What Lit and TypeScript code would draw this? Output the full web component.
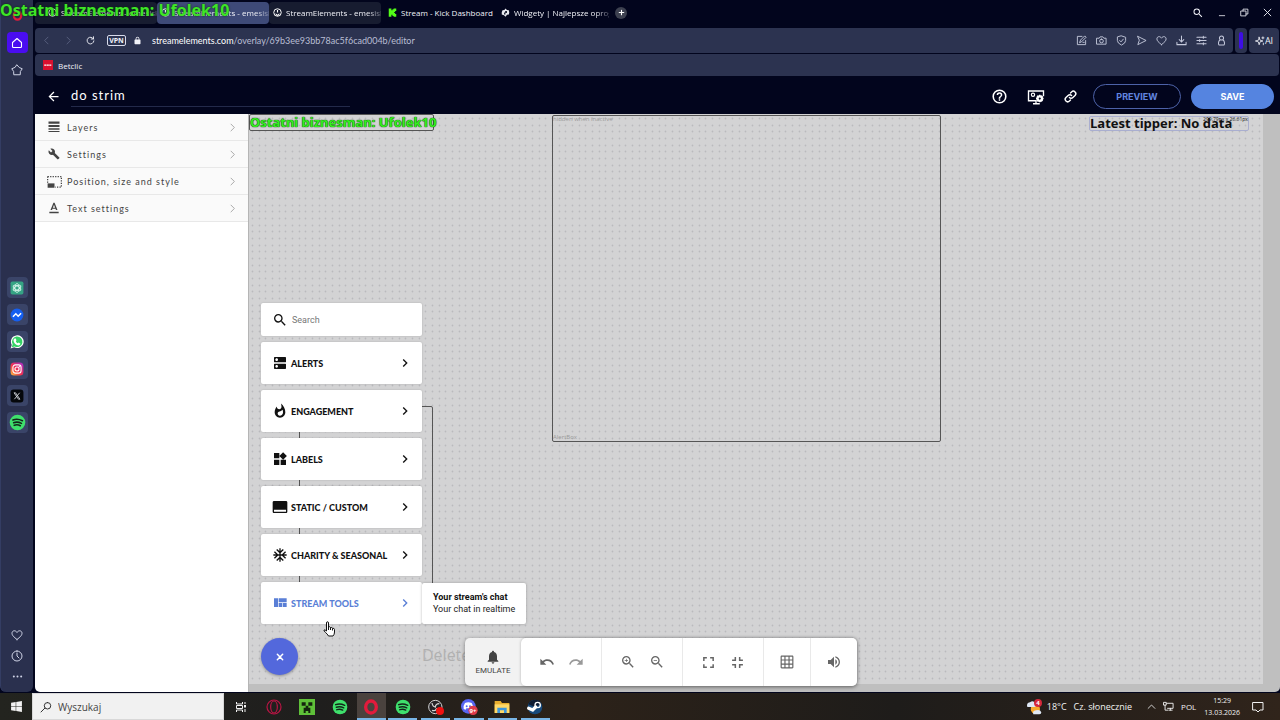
import { LitElement, html, css, svg } from "lit";
import { customElement } from "lit/decorators.js";
import { classMap } from "lit/directives/class-map.js";

const solid = (d: string) => svg`<path fill="currentColor" d=${d}></path>`;
const line = (d: string, w = 1.5) =>
  svg`<path fill="none" stroke="currentColor" stroke-width=${w} stroke-linecap="round" stroke-linejoin="round" d=${d}></path>`;

const spotify = svg`<circle cx="12" cy="12" r="11" fill="#3fe06c"></circle><path fill="none" stroke="#13261a" stroke-width="2.2" stroke-linecap="round" d="M5.5 8.5Q12 6 19 9.5M6.5 12.3Q12 10.3 17.6 13.2M7.3 16Q12 14.3 16 16.6"></path>`;
const seMark = svg`<circle cx="12" cy="12" r="10" fill="none" stroke="#fff" stroke-width="2.6"></circle><path fill="#fff" d="M10.5 5h3v7h-3zM7 14l5 4 5-4v3l-5 4-5-4z"></path>`;

const icons: Record<string, unknown> = {
  back: solid("M20 11H7.83l5.59-5.59L12 4l-8 8 8 8 1.41-1.41L7.83 13H20z"),
  chevron: solid("M10 6 8.59 7.41 13.17 12l-4.58 4.59L10 18l6-6z"),
  thin: line("M8 3l9 9-9 9", 2.2),
  thinLeft: line("M16 3l-9 9 9 9", 2.2),
  search: solid("M15.5 14h-.79l-.28-.27A6.471 6.471 0 0 0 16 9.5 6.5 6.5 0 1 0 9.5 16c1.61 0 3.09-.59 4.23-1.57l.27.28v.79l5 4.99L20.49 19zm-6 0C7.01 14 5 11.99 5 9.5S7.01 5 9.5 5 14 7.01 14 9.5 11.99 14 9.5 14z"),
  dns: solid("M20 13H4c-.55 0-1 .45-1 1v6c0 .55.45 1 1 1h16c.55 0 1-.45 1-1v-6c0-.55-.45-1-1-1zM7 19c-1.1 0-2-.9-2-2s.9-2 2-2 2 .9 2 2-.9 2-2 2zM20 3H4c-.55 0-1 .45-1 1v6c0 .55.45 1 1 1h16c.55 0 1-.45 1-1V4c0-.55-.45-1-1-1zM7 9c-1.1 0-2-.9-2-2s.9-2 2-2 2 .9 2 2-.9 2-2 2z"),
  fire: solid("M13.5.67s.74 2.65.74 4.8c0 2.06-1.35 3.73-3.41 3.73-2.07 0-3.63-1.67-3.63-3.73l.03-.36C5.21 7.51 4 10.62 4 14c0 4.42 3.58 8 8 8s8-3.58 8-8C20 8.61 17.41 3.8 13.5.67zM11.71 19c-1.78 0-3.22-1.4-3.22-3.14 0-1.62 1.05-2.76 2.81-3.12 1.77-.36 3.6-1.21 4.62-2.58.39 1.29.59 2.65.59 4.04 0 2.65-2.15 4.8-4.8 4.8z"),
  widgets: solid("M13 13v8h8v-8h-8zM3 21h8v-8H3v8zM3 3v8h8V3H3zm13.66-1.31L11 7.34 16.66 13l5.66-5.66-5.66-5.65z"),
  label: solid("M21 3H3c-1.1 0-2 .9-2 2v14c0 1.1.9 2 2 2h18c1.1 0 2-.9 2-2V5c0-1.1-.9-2-2-2zm0 16H3v-3h18v3z"),
  snow: solid("M22 11h-4.17l3.24-3.24-1.41-1.42L15 11h-2V9l4.66-4.66-1.42-1.41L13 6.17V2h-2v4.17L7.76 2.93 6.34 4.34 11 9v2H9L4.34 6.34 2.93 7.76 6.17 11H2v2h4.17l-3.24 3.24 1.41 1.42L9 13h2v2l-4.66 4.66 1.42 1.41L11 17.83V22h2v-4.17l3.24 3.24 1.42-1.41L13 15v-2h2l4.66 4.66 1.41-1.42L17.83 13H22z"),
  quilt: solid("M10 18h5v-6h-5v6zm-7 0h6V5H3v13zm13 0h6v-6h-6v6zM10 5v6h12V5H10z"),
  bell: solid("M12 22c1.1 0 2-.9 2-2h-4c0 1.1.89 2 2 2zm6-6v-5c0-3.07-1.64-5.64-4.5-6.32V4c0-.83-.67-1.5-1.5-1.5s-1.5.67-1.5 1.5v.68C7.63 5.36 6 7.92 6 11v5l-2 2v1h16v-1z"),
  undo: solid("M12.5 8c-2.65 0-5.05.99-6.9 2.6L2 7v9h9l-3.62-3.62c1.39-1.16 3.16-1.88 5.12-1.88 3.54 0 6.55 2.31 7.6 5.5l2.37-.78C21.08 11.03 17.15 8 12.5 8z"),
  redo: solid("M18.4 10.6C16.55 8.99 14.15 8 11.5 8c-4.65 0-8.58 3.03-9.96 7.22L3.9 16a8.002 8.002 0 0 1 7.6-5.5c1.95 0 3.73.72 5.12 1.88L13 16h9V7z"),
  zoomIn: solid("M15.5 14h-.79l-.28-.27A6.471 6.471 0 0 0 16 9.5 6.5 6.5 0 1 0 9.5 16c1.61 0 3.09-.59 4.23-1.57l.27.28v.79l5 4.99L20.49 19zm-6 0C7.01 14 5 11.99 5 9.5S7.01 5 9.5 5 14 7.01 14 9.5 11.99 14 9.5 14zM12 10h-2v2H9v-2H7V9h2V7h1v2h2z"),
  zoomOut: solid("M15.5 14h-.79l-.28-.27A6.471 6.471 0 0 0 16 9.5 6.5 6.5 0 1 0 9.5 16c1.61 0 3.09-.59 4.23-1.57l.27.28v.79l5 4.99L20.49 19zm-6 0C7.01 14 5 11.99 5 9.5S7.01 5 9.5 5 14 7.01 14 9.5 11.99 14 9.5 14zM7 9h5v1H7z"),
  expand: solid("M2 2h7v2.800H4.800V9H2zM15 2h7v7h-2.800V4.800H15zM2 15h2.800v4.200H9V22H2zM19.200 15H22v7h-7v-2.800h4.200z"),
  shrink: solid("M6.600 2h2.800v7.400H2V6.600h4.600zM14.600 2h2.800v4.600H22v2.800h-7.400zM2 14.600h7.400V22H6.600v-4.600H2zM14.600 14.600H22v2.800h-4.600V22h-2.800z"),
  grid: solid("M21 1H3c-1.100 0-2 .9-2 2v18c0 1.100.9 2 2 2h18c1.100 0 2-.9 2-2V3c0-1.100-.9-2-2-2zM7.500 21H3v-4.500h4.500zm0-6.500H3v-5h4.500zm0-7H3V3h4.500zm7 13.500h-5v-4.500h5zm0-6.500h-5v-5h5zm0-7h-5V3h5zM21 21h-4.500v-4.500H21zm0-6.500h-4.500v-5H21zm0-7h-4.500V3H21z"),
  volume: solid("M3 9v6h4l5 5V4L7 9H3zm13.500 3A4.500 4.500 0 0 0 14 7.970v8.050c1.480-.73 2.500-2.250 2.500-4.020zM14 3.230v2.060c2.890.86 5 3.540 5 6.710s-2.110 5.850-5 6.710v2.060c4.010-.91 7-4.490 7-8.770s-2.990-7.860-7-8.770z"),
  close: line("M4 4l16 16M20 4L4 20", 4.5),
  windowClose: line("M3 3l18 18M21 3L3 21", 2.4),
  layers: solid("M1 1h22v4.500H1zM1 8h22v4H1zM1 14.500h22v3H1zM1 20h22v2H1z"),
  wrench: solid("M22.700 19l-9.100-9.100c.9-2.300.4-5-1.500-6.900-2-2-5-2.400-7.400-1.300L9 6 6 9 1.600 4.700C.4 7.100.9 10.100 2.900 12.100c1.900 1.900 4.600 2.400 6.900 1.500l9.100 9.100c.4.4 1 .4 1.400 0l2.300-2.300c.5-.4.5-1.100.1-1.400z"),
  position: svg`<path fill="none" stroke="currentColor" stroke-width="2" stroke-dasharray="2 2" d="M1 4h22v17H13M1 4v12"></path><path fill="currentColor" d="M1 15h11v7H1z"></path>`,
  textA: solid("M4 18.500v2.500h16v-2.500zM9.500 13.300h5l.9 2.200h2.600L13 3h-2L6 15.500h2.600zM12 6.300l1.870 5.200h-3.740z"),
  help: solid("M11 18h2v-2h-2zm1-16a10 10 0 1 0 0 20 10 10 0 0 0 0-20zm0 17.800a7.800 7.800 0 1 1 0-15.600 7.800 7.800 0 0 1 0 15.600zM12 6a4 4 0 0 0-4 4h2.200a1.800 1.800 0 1 1 3.600 0c0 2-3 1.750-3 5h2.200c0-2.250 3-2.500 3-5a4 4 0 0 0-4-4z"),
  monitor: svg`<path fill="none" stroke="currentColor" stroke-width="1.800" d="M22 11V4H2v13h11M8 21h9M12 17v4"></path><circle cx="8" cy="9" r="2.200" fill="none" stroke="currentColor" stroke-width="1.500"></circle><circle cx="17" cy="14" r="3" fill="none" stroke="currentColor" stroke-width="3"></circle><path stroke="currentColor" stroke-width="2" d="M17 9v3M17 16v3M12 14h3M19 14h3M13.500 10.500l2 2M18.500 15.500l2 2M20.500 10.500l-2 2M13.500 17.500l2-2"></path>`,
  link: line("M10 14a4.500 4.500 0 0 0 6.400 0l4-4A4.500 4.500 0 0 0 14 3.600l-2 2M14 10a4.500 4.500 0 0 0-6.400 0l-4 4A4.500 4.500 0 0 0 10 20.400l2-2", 2.600),
  home: line("M3 11l9-8 9 8v8q0 2-2 2H5q-2 0-2-2z", 2.2),
  star: line("M12 2l4.500 5 6 2.500-3.800 5.500-.2 6.500H5.500L5.300 15 1.500 9.500l6-2.500z", 2),
  heart: line("M12 21C5 15.500 2 12.500 2 8.500 2 3 9 1.500 12 7c3-5.500 10-4 10 1.500 0 4-3 7-10 12.500z", 2),
  clock: line("M12 2a10 10 0 1 0 0 20 10 10 0 0 0 0-20zM12 6v6l4 4", 2),
  dots: svg`<g fill="currentColor"><circle cx="4" cy="12" r="2.200"></circle><circle cx="12" cy="12" r="2.200"></circle><circle cx="20" cy="12" r="2.200"></circle></g>`,
  reload: line("M20 8a9 9 0 1 0 1 5M20 2v6h-6", 2.4),
  lock: solid("M18 9h-1V7A5 5 0 0 0 7 7v2H6q-2 0-2 2v9q0 2 2 2h12q2 0 2-2v-9q0-2-2-2zM9 9V7a3 3 0 0 1 6 0v2z"),
  edit: line("M13 3H3v18h18V12M8 16l2-5 9-9 3 3-9 9zM15 16h3", 2),
  camera: line("M2 7h5l2-3h6l2 3h5v13H2zM12 9a4 4 0 1 0 0 8 4 4 0 0 0 0-8z", 2),
  shield: line("M12 2l9 3v7q0 6-9 10-9-4-9-10V5zM8 12l3 3 5-6", 2),
  send: line("M4 3l18 9-18 9 3-9z", 2),
  download: line("M12 2v13M7 10l5 5 5-5M2 16v5h20v-5", 2.2),
  sliders: line("M2 5h20M2 12h20M2 19h20M16 3v4M8 10v4M16 17v4", 2.2),
  person: line("M12 2a4.500 4.500 0 1 0 0 9 4.500 4.500 0 0 0 0-9zM8.500 11C5 13 4 22 8 22h8c4 0 3-9-.5-11", 2.2),
  spark: line("M10 3l2 7 7 2-7 2-2 7-2-7-7-2 7-2zM19 2v5M16.500 4.500h5M20 17v4", 2),
  restore: line("M3 8h13v13H3zM8 8V3h13v13h-5", 2.2),
  minimize: line("M4 20h16", 2.4),
  plus: line("M12 6v12M6 12h12", 3),
  se: seMark,
  kick: svg`<path fill="#53fc18" d="M2 1h7v5h3V3h3V1h7v7h-3v3h-3v2h3v3h3v7h-7v-2h-3v-3H9v5H2z"></path>`,
  puzzle: svg`<path fill="#e9eaf0" d="M12 1l4 4 5 1 1 6-1 5-5 1-4 5-4-4-6-2 0-6 2-5 5-1z"></path><path fill="#222638" d="M11 8h5v5h-4v4H8v-5h3z"></path>`,
  betclic: svg`<path fill="#d9102f" d="M0 0h24v24H0z"></path><path stroke="#fff" stroke-width="3" stroke-dasharray="5 1" d="M3 12h18"></path>`,
  gpt: svg`<rect x="1" y="1" width="22" height="22" rx="3" fill="#35a384"></rect><g fill="none" stroke="#d5f4ea" stroke-width="1.500"><ellipse cx="12" cy="12" rx="3.500" ry="7.500"></ellipse><ellipse cx="12" cy="12" rx="3.500" ry="7.500" transform="rotate(60 12 12)"></ellipse><ellipse cx="12" cy="12" rx="3.500" ry="7.500" transform="rotate(120 12 12)"></ellipse></g>`,
  messenger: svg`<circle cx="12" cy="12" r="11" fill="#155ff0"></circle><path fill="none" stroke="#fff" stroke-width="2.600" d="M5 15l5-5 4 4 5-5"></path>`,
  whatsapp: svg`<path fill="#fff" d="M1 23l2-6A11 11 0 1 1 7 21z"></path><path fill="#35d366" d="M3 21l1.500-5A9 9 0 1 1 8 19.500z"></path><path fill="#fff" d="M8 6l2 0 1 3-1 2q1 2 3 3l2-1 3 2q-1 3-4 3-7-2-8-8 0-3 2-4z"></path>`,
  instagram: svg`<defs><linearGradient id="ig" x1="0" y1="1" x2="1" y2="0"><stop offset="0" stop-color="#fdc23c"></stop><stop offset=".45" stop-color="#f2304f"></stop><stop offset="1" stop-color="#a22cd0"></stop></linearGradient></defs><rect x="1" y="1" width="22" height="22" rx="6" fill="url(#ig)"></rect><g fill="none" stroke="#fff" stroke-width="1.900"><rect x="5" y="5" width="14" height="14" rx="4"></rect><circle cx="12" cy="12" r="3.500"></circle></g><circle cx="16" cy="8" r="1.200" fill="#fff"></circle>`,
  xapp: svg`<rect x="1" y="1" width="22" height="22" rx="5" fill="#05070b"></rect><path fill="none" stroke="#d9dbe0" stroke-width="1.500" d="M7 6.500h2.500L17 17.500h-2.500zM16.500 6.500l-9 11"></path>`,
  spotify,
  opera: svg`<ellipse cx="12" cy="12" rx="8" ry="9" fill="none" stroke="#e21b3c" stroke-width="5"></ellipse>`,
  operaGx: svg`<g fill="none" stroke="#b81544" stroke-width="1.800"><circle cx="12" cy="12" r="10.500"></circle><ellipse cx="12" cy="12" rx="5" ry="9"></ellipse></g>`,
  windows: solid("M2 5l8.500-1.300v7.800H2zM11.500 3.500L22 2v9.500H11.500zM2 12.500h8.500v7.800L2 19zM11.500 12.500H22V22l-10.500-1.500z"),
  taskview: svg`<path fill="none" stroke="currentColor" stroke-width="2" d="M3 2v4h12V2M3 22v-4h12v4M3 9h12v6H3zM20 2v4M20 16v6"></path><path fill="currentColor" d="M18 8h4v5h-4z"></path>`,
  winSearch: line("M15 3a6.500 6.500 0 1 0 0 13 6.500 6.500 0 0 0 0-13zM10 14l-8 8", 2),
  creeper: svg`<path fill="#5fc039" d="M0 0h24v24H0z"></path><path fill="#14240e" d="M4 5h6v5H4zM14 5h6v5h-6zM10 10h4v3h3v8h-3v-3h-4v3H7v-8h3z"></path>`,
  obs: svg`<circle cx="11" cy="12" r="10" fill="#242226" stroke="#d5d5d5" stroke-width="1.500"></circle><path fill="none" stroke="#d5d5d5" stroke-width="1.800" d="M6 6q1 6 6 6M17 7q-6 0-6 6M6 17q5 2 7-3"></path><circle cx="18" cy="18" r="6" fill="#ef1111"></circle>`,
  discord: svg`<circle cx="11" cy="11" r="11" fill="#5865f2"></circle><path fill="#fff" d="M6 6q5-2 10 0 3 4 2 9l-3 1-1-2H8l-1 2-3-1Q3 10 6 6z"></path><circle cx="8.500" cy="11" r="1.500" fill="#5865f2"></circle><circle cx="13.500" cy="11" r="1.500" fill="#5865f2"></circle><circle cx="18" cy="17" r="7" fill="#df3b4c"></circle><text x="18" y="20.500" font-size="9" font-weight="700" text-anchor="middle" fill="#fff" font-family="Open Sans, sans-serif">9+</text>`,
  folder: svg`<path fill="#e8ae2f" d="M1 3h9l2 3h11v15H1z"></path><path fill="#ffd969" d="M1 8h22v13H1z"></path><path fill="#3e97dc" d="M5 13h14v8h-4v-4H9v4H5z"></path>`,
  steam: svg`<circle cx="12" cy="12" r="11" fill="#174a7c"></circle><path fill="#0d1c33" d="M2 8a11 11 0 0 1 20-1L12 12z"></path><circle cx="16" cy="9" r="4" fill="none" stroke="#fff" stroke-width="2"></circle><path stroke="#fff" stroke-width="5" stroke-linecap="round" d="M2.500 14l6 2.500M9 16l4-4"></path>`,
  weather: svg`<circle cx="14" cy="15" r="7" fill="#f7a92c"></circle><path fill="#dfe8f5" d="M2 12q-2-6 4-7 5-4 8 2 3 4-2 5zM11 23q-2-5 4-6 6-2 8 3 0 3-3 3z"></path><circle cx="18" cy="6" r="6" fill="#d4283a"></circle><text x="18" y="9.500" font-size="9" font-weight="700" text-anchor="middle" fill="#fff" font-family="Open Sans, sans-serif">4</text>`,
  caret: line("M3 17l9-9 9 9", 2.2),
  network: line("M8 5h14v11H10M2 3h5v6H2zM4.500 9v11h6M13 20h7M16 16v4", 2),
  notice: line("M2 3h20v15h-6l-4 4-4-4H2z", 2),
};

const icon = (name: string, size = 12, cls = "") =>
  html`<svg class="icon ${cls}" width=${size} height=${size} viewBox="0 0 24 24" aria-hidden="true">${icons[name]}</svg>`;

const base = css`
  *, *::before, *::after { box-sizing: border-box; }
  :host { font-family: "Open Sans", "Noto Sans", sans-serif; }
  .icon { display: block; flex: none; overflow: visible; }
  button { appearance: none; border: 0; margin: 0; padding: 0; background: none; color: inherit; font: inherit;
    display: flex; align-items: center; justify-content: center; }
  input { border: 0; outline: 0; padding: 0; margin: 0; background: none; color: inherit; font: inherit; min-width: 0; }
  a { color: inherit; text-decoration: none; }
`;

@customElement("side-rail")
class SideRail extends LitElement {
  static styles = [base, css`
    :host { display: flex; flex-direction: column; align-items: center; background: #2a304e; color: #cfd3e6;
      border-radius: 0 0 6px 6px; padding: 10px 0 5px; border-left: 1px solid #343d63; }
    .group { display: flex; flex-direction: column; align-items: center; gap: 6px; }
    .opera { height: 17px; margin-bottom: 5px; }
    button { width: 21px; height: 21px; border-radius: 4px; }
    .home { background: #4a0df0; color: #fff; }
    .apps { margin: auto 0; padding-top: 6px; }
    .app { background: #3a4468; }
    .foot { gap: 0; }
  `];
  render() {
    return html`
      <div class="group"><span class="opera">${icon("opera", 11)}</span></div>
      <div class="group">
        <button class="home" aria-label="Home">${icon("home", 12)}</button>
        <button aria-label="Bookmarks">${icon("star", 12)}</button>
      </div>
      <div class="group apps">
        ${["gpt", "messenger", "whatsapp", "instagram", "xapp", "spotify"].map(
          (n) => html`<button class="app" aria-label=${n}>${icon(n, n === "spotify" ? 17 : 14)}</button>`)}
      </div>
      <div class="group foot">
        <button aria-label="Favourites">${icon("heart", 12)}</button>
        <button aria-label="History">${icon("clock", 12)}</button>
        <button aria-label="More">${icon("dots", 11)}</button>
      </div>`;
  }
}

const tabs = [
  { icon: "se", title: "StreamElements - emesisk", shade: "dim" },
  { icon: "se", title: "StreamElements - emesisk", shade: "active" },
  { icon: "se", title: "StreamElements - emesisk", shade: "dim" },
  { icon: "kick", title: "Stream - Kick Dashboard", shade: "wide" },
  { icon: "puzzle", title: "Widgety | Najlepsze oprog", shade: "plain" },
];

@customElement("browser-chrome")
class BrowserChrome extends LitElement {
  static styles = [base, css`
    :host { display: block; color: #f1f2f8; font-size: 8px; }
    .tabs { display: flex; align-items: center; height: 28px; padding: 0 8px 3px 0; }
    .tab { display: flex; align-items: center; justify-content: flex-start; gap: 4px; width: 112px; height: 22px; padding: 0 0 0 4px; border-radius: 4px; }
    .tab.dim { background: #171c30; }
    .tab.active { background: #3e4a78; }
    .tab.wide { width: 116px; padding-left: 7px; }
    .tab:first-child { width: 122px; padding-left: 13px; }
    .name { overflow: hidden; white-space: nowrap; mask-image: linear-gradient(90deg, #000 85%, #0004); }
    .wide .name { mask-image: none; }
    .add { width: 12px; height: 12px; border-radius: 6px; background: #3d4150; margin-left: 6px; color: #fff; }
    .window { display: flex; gap: 14px; margin-left: auto; }
    .bar { display: flex; gap: 2px; height: 25px; margin-right: 1px; }
    .address { flex: 1; display: flex; align-items: center; background: #2c3350; border-radius: 4px; padding: 0 6px 0 7px; }
    .nav { display: flex; gap: 13px; margin-right: 12px; }
    .off { color: #5d6584; }
    .vpn { border: 1px solid #d7daea; border-radius: 2px; font-size: 7px; line-height: 9px; font-weight: 700; margin-right: 7px; width: 19px; }
    .url { flex: 1; margin-left: 10px; font-family: Lato, sans-serif; font-size: 9px; color: #b9bed3; }
    .url b { font-weight: 400; color: #fff; }
    .tools { display: flex; gap: 9px; color: #c5c9dc; }
    .pill { background: #2c3350; border-radius: 4px; width: 12px; padding: 4px; }
    .pill span { display: block; height: 17px; background: #3d0de6; border-radius: 2px; }
    .ai { background: #2c3350; border-radius: 4px; width: 30px; font-size: 9px; }
    .marks { display: flex; align-items: center; height: 22px; background: #2c3350; border-radius: 4px; margin: 1px 1px 0 0; padding: 0 8px; }
    .marks a { display: flex; align-items: center; gap: 5px; }
  `];
  render() {
    return html`
      <div class="tabs">
        ${tabs.map((t) => html`<button class=${classMap({ tab: true, [t.shade]: true })}>${icon(t.icon, 9)}<span class="name">${t.title}</span></button>`)}
        <button class="add" aria-label="New tab">${icon("plus", 9)}</button>
        <div class="window">
          <button aria-label="Search tabs">${icon("search", 12)}</button>
          <button aria-label="Minimize">${icon("minimize", 8)}</button>
          <button aria-label="Restore">${icon("restore", 9)}</button>
          <button aria-label="Close">${icon("windowClose", 9)}</button>
        </div>
      </div>
      <div class="bar">
        <div class="address">
          <div class="nav">
            <button class="off" aria-label="Back">${icon("thinLeft", 9)}</button>
            <button class="off" aria-label="Forward">${icon("thin", 9)}</button>
            <button aria-label="Reload">${icon("reload", 9)}</button>
          </div>
          <button class="vpn">VPN</button>
          ${icon("lock", 9)}
          <span class="url"><b>streamelements.com</b>/overlay/69b3ee93bb78ac5f6cad004b/editor</span>
          <div class="tools">
            ${["edit", "camera", "shield", "send", "heart", "download", "sliders", "person"].map(
              (n) => html`<button aria-label=${n}>${icon(n, 11)}</button>`)}
          </div>
        </div>
        <div class="pill"><span></span></div>
        <button class="ai">${icon("spark", 10)}AI</button>
      </div>
      <div class="marks"><a href="#betclic">${icon("betclic", 10)}Betclic</a></div>`;
  }
}

@customElement("editor-header")
class EditorHeader extends LitElement {
  static styles = [base, css`
    :host { display: flex; align-items: center; height: 38px; padding: 3px 6px 0 11px; color: #fff; }
    .title { width: 279px; height: 20px; margin-left: 10px; border-bottom: 1px solid #232a4a; font-family: Lato, sans-serif; font-size: 13px; letter-spacing: 1px; padding-bottom: 2px; }
    .actions { display: flex; align-items: center; gap: 19px; margin-left: auto; }
    .buttons { display: flex; gap: 10px; margin-left: 16px; }
    .pill { height: 25px; border-radius: 13px; font-family: Inter, sans-serif; font-size: 9px; font-weight: 700; }
    .preview { width: 88px; border: 1px solid #4d62a8; color: #6385e0; }
    .save { width: 83px; background: #5584e0; color: #fff; }
  `];
  render() {
    return html`
      <button aria-label="Back">${icon("back", 15)}</button>
      <input class="title" aria-label="Overlay name" .value=${"do strim"} />
      <div class="actions">
        <button aria-label="Help">${icon("help", 17)}</button>
        <button aria-label="Display settings">${icon("monitor", 18)}</button>
        <button aria-label="Copy link">${icon("link", 13)}</button>
      </div>
      <div class="buttons">
        <button class="pill preview">PREVIEW</button>
        <button class="pill save">SAVE</button>
      </div>`;
  }
}

@customElement("settings-panel")
class SettingsPanel extends LitElement {
  static styles = [base, css`
    :host { display: block; background: #fff; border-right: 1px solid #b5b5b5; border-radius: 0 0 0 5px; }
    .list { display: grid; }
    .row { display: grid; grid-template-columns: 14px 1fr auto; gap: 6px; height: 27px; padding: 0 11px 0 12px;
      border-bottom: 1px solid #e8e8e8; background: #fafafa; color: #444; text-align: left;
      font-family: Lato, sans-serif; font-size: 9px; letter-spacing: 1px; }
    .icon { justify-self: center; }
    .arrow { color: #999; }
  `];
  render() {
    const rows = [["layers", "Layers", 12], ["wrench", "Settings", 12], ["position", "Position, size and style", 15], ["textA", "Text settings", 14]] as const;
    return html`<div class="list">${rows.map(([i, label, size]) => html`<button class="row">${icon(i, size)}<span>${label}</span>${icon("thin", 9, "arrow")}</button>`)}</div>`;
  }
}

@customElement("widget-menu")
class WidgetMenu extends LitElement {
  static styles = [base, css`
    :host { display: flex; flex-direction: column; gap: 6px; font-family: Roboto, sans-serif; font-size: 10px; color: #111; }
    .card { background: #fff; border-radius: 2px; box-shadow: 0 0 2px #0003; width: 100%; }
    .search { display: flex; align-items: center; gap: 4px; height: 33px; padding: 0 11px; }
    .search input { flex: 1; font-size: 9px; }
    .search input::placeholder { color: #777; opacity: 1; }
    .item { height: 42px; padding: 0 9px 0 11px; gap: 3px; font-family: Lato, sans-serif; font-size: 9px; font-weight: 900; justify-content: flex-start; }
    .item span { flex: 1; text-align: left; white-space: nowrap; }
    .chosen { color: #5a7fd6; }
    .fab { width: 37px; height: 37px; border-radius: 50%; background: #5368dc; color: #fff; margin-top: 8px; box-shadow: 0 1px 3px #0005; }
  `];
  render() {
    const items = [["dns", "ALERTS"], ["fire", "ENGAGEMENT"], ["widgets", "LABELS"], ["label", "STATIC / CUSTOM"], ["snow", "CHARITY & SEASONAL"], ["quilt", "STREAM TOOLS"]];
    return html`
      <label class="card search">${icon("search", 16)}<input type="text" placeholder="Search" aria-label="Search widgets" /></label>
      ${items.map(([i, t]) => html`<button class=${classMap({ card: true, item: true, chosen: i === "quilt" })}>${icon(i, 16)}<span>${t}</span>${icon("chevron", 16)}</button>`)}
      <button class="fab" aria-label="Close menu">${icon("close", 8)}</button>`;
  }
}

@customElement("canvas-toolbar")
class CanvasToolbar extends LitElement {
  static styles = [base, css`
    :host { display: flex; height: 48px; background: #f2f2f2; border-radius: 5px; box-shadow: 0 1px 4px #0006; color: #666; }
    .emulate { flex-direction: column; gap: 1px; width: 56px; font-family: Roboto, sans-serif; font-size: 8px; line-height: 10px; color: #444; }
    .tools { display: flex; background: #fff; border-radius: 5px; box-shadow: 0 0 3px #0004; }
    .set { display: flex; align-items: center; justify-content: center; gap: 14px; width: 81px; border-left: 1px solid #e9e9e9; }
    .set:first-child { border-left: 0; width: 80px; }
    .set.one { width: 47px; }
    .set button { width: 15px; }
    .faint { color: #999; }
  `];
  render() {
    const sets = [["undo", "redo"], ["zoomIn", "zoomOut"], ["expand", "shrink"], ["grid"], ["volume"]];
    const sizes: Record<string, number> = { expand: 13, shrink: 13, grid: 14 };
    return html`
      <button class="emulate">${icon("bell", 16)}<span>EMULATE</span></button>
      <div class="tools">
        ${sets.map((s) => html`<div class=${classMap({ set: true, one: s.length === 1 })}>
          ${s.map((n) => html`<button class=${n === "redo" ? "faint" : ""} aria-label=${n}>${icon(n, sizes[n] ?? 16)}</button>`)}
        </div>`)}
      </div>`;
  }
}

@customElement("overlay-canvas")
class OverlayCanvas extends LitElement {
  static styles = [base, css`
    :host { display: block; position: relative; overflow: hidden; background: #bfbfbf; padding: 0 17px 8px 0; border-radius: 0 0 5px 0; }
    .dots { display: block; width: 100%; height: 100%; background: #d3d3d4; }
    .node { position: absolute; border: 1px solid #555; border-radius: 2px; white-space: nowrap; }
    .green { left: 0; top: 0; width: 185px; height: 17px; }
    .neon { font-family: "Noto Sans", sans-serif; font-weight: 700; font-size: 13px; line-height: 14px; color: #35ee21; text-shadow: 0 0 1px #063a00, 0 0 1px #063a00; }
    .alert { left: 303px; top: 1px; width: 389px; height: 327px; display: flex; flex-direction: column; justify-content: space-between; font-size: 6px; line-height: 7px; color: #999; }
    .goal { left: 50px; top: 292px; width: 134px; height: 210px; }
    .tipper { right: 31px; top: 2px; width: 160px; height: 15px; border-color: #a9aed0; font-size: 13px; line-height: 13px; font-weight: 700; color: #111; }
    .size { position: absolute; right: 0; top: 0; font-size: 5px; line-height: 5px; font-weight: 400; }
    .drop { position: absolute; left: 173px; bottom: 26px; font-size: 16px; line-height: 22px; color: #b0b0b0; }
    .menu { position: absolute; left: 12px; bottom: 17px; width: 161px; }
    .tip { position: absolute; left: 173px; bottom: 68px; width: 104px; height: 41px; background: #fff; border-radius: 2px; box-shadow: 0 0 3px #0004;
      font-family: Roboto, sans-serif; font-size: 9px; line-height: 12px; color: #222; padding: 8px 0 0 11px; white-space: nowrap; }
    .tip b { display: block; color: #111; }
    .toolbar { position: absolute; left: 216px; bottom: 6px; }
    .cursor { position: absolute; left: 74px; bottom: 55px; }
  `];
  render() {
    return html`
      <svg class="dots" aria-hidden="true">
        <defs><pattern id="dots" width="20" height="20" patternUnits="userSpaceOnUse">
          ${[4, 11, 17].map((y) => [3, 10, 16].map((x) => svg`<circle cx=${x + 0.5} cy=${y + 0.5} r="0.9" fill="#bababd"></circle>`))}
        </pattern></defs>
        <rect width="100%" height="100%" fill="url(#dots)"></rect>
      </svg>
      <div class="node green neon">Ostatni biznesman: Ufolek10</div>
      <div class="node alert"><span>hidden when inactive</span><span>AlertBox</span></div>
      <div class="node goal"></div>
      <div class="node tipper">Latest tipper: No data<span class="size">299.79px x 26.61px</span></div>
      <div class="drop">Delete</div>
      <widget-menu class="menu"></widget-menu>
      <div class="tip" role="tooltip"><b>Your stream's chat</b>Your chat in realtime</div>
      <canvas-toolbar class="toolbar"></canvas-toolbar>
      <svg class="cursor" width="12" height="16" viewBox="0 0 24 32" aria-hidden="true">
        <path fill="#fff" stroke="#111" stroke-width="2" stroke-linejoin="round" d="M7 20V4q0-2.500 2-2.500t2 2.500v8q3-1.500 4 1 3-1 3.500 1.500Q23 14 23 17v5q0 5-3 8h-9q-2-4-6-7-4-4-3-5 2-1 5 2zM11 12v6M15 13v5M19 15v4"></path>
      </svg>`;
  }
}

@customElement("task-bar")
class TaskBar extends LitElement {
  static styles = [base, css`
    :host { display: flex; height: 27px; background: linear-gradient(90deg, #23241f, #1f1e1d 25%, #2c2219 45%, #1e1c1a 70%, #30241b); color: #f2f2f2; font-size: 9px; }
    .start { width: 32px; }
    .search { width: 192px; background: #f1f1f1; color: #333; display: flex; align-items: center; gap: 6px; padding: 0 7px; border: 1px solid #d8d8d8; }
    .search input { flex: 1; font-size: 10px; }
    .search input::placeholder { color: #444; opacity: 1; }
    .apps { display: flex; width: 328px; }
    .apps button { flex: 1; border-bottom: 2px solid transparent; padding-top: 2px; margin: 0 2px; }
    .apps .open { border-color: #78b5e6; }
    .apps .front { background: #4a423e; margin: 0; }
    .tray { margin-left: auto; display: flex; align-items: center; padding-right: 16px; font-size: 8px; }
    .weather { gap: 5px; margin-right: 15px; font-size: 9px; }
    .weather b { font-weight: 400; margin-right: 2px; }
    .small { display: flex; align-items: center; gap: 7px; margin-right: 8px; }
    .clock { text-align: center; font-size: 7px; line-height: 12px; margin-right: 12px; }
  `];
  render() {
    const apps = [["taskview", 0], ["operaGx", 0], ["creeper", 0], ["spotify", 0], ["opera", 2], ["spotify", 1], ["obs", 1], ["discord", 1], ["folder", 1], ["steam", 1]] as const;
    return html`
      <button class="start" aria-label="Start">${icon("windows", 13)}</button>
      <label class="search">${icon("winSearch", 12)}<input type="text" placeholder="Wyszukaj" aria-label="Wyszukaj" /></label>
      <div class="apps">${apps.map(([n, s]) => html`<button aria-label=${n} class=${classMap({ open: s > 0, front: s === 2 })}>${icon(n, n === "taskview" ? 12 : 16)}</button>`)}</div>
      <div class="tray">
        <button class="weather">${icon("weather", 16)}<b>18°C</b><span>Cz. słonecznie</span></button>
        <div class="small">${icon("caret", 9)}${icon("network", 11)}<span>POL</span></div>
        <div class="clock"><div>15:29</div><div>13.03.2026</div></div>
        <button aria-label="Notifications">${icon("notice", 12)}</button>
      </div>`;
  }
}

@customElement("app-root")
class AppRoot extends LitElement {
  static styles = [base, css`
    :host { display: flex; flex-direction: column; height: 100vh; position: relative; overflow: hidden; background: #02051d; }
    .browser { flex: 1; min-height: 0; display: flex; gap: 2px; padding-bottom: 1px; }
    .rail { width: 33px; flex: none; }
    .main { flex: 1; min-width: 0; display: flex; flex-direction: column; }
    .work { flex: 1; min-height: 0; display: grid; grid-template-columns: 214px 1fr; grid-template-rows: minmax(0, 1fr); }
    .banner { position: absolute; left: 0; top: 0; font-family: "Noto Sans", sans-serif; font-weight: 700; font-size: 16px; line-height: 20px; color: #3ee527; white-space: nowrap; text-shadow: 0 0 2px #052a00; }
  `];
  render() {
    return html`
      <div class="browser">
        <side-rail class="rail"></side-rail>
        <div class="main">
          <browser-chrome></browser-chrome>
          <editor-header></editor-header>
          <div class="work">
            <settings-panel></settings-panel>
            <overlay-canvas></overlay-canvas>
          </div>
        </div>
      </div>
      <task-bar></task-bar>
      <div class="banner">Ostatni biznesman: Ufolek10</div>`;
  }
}
